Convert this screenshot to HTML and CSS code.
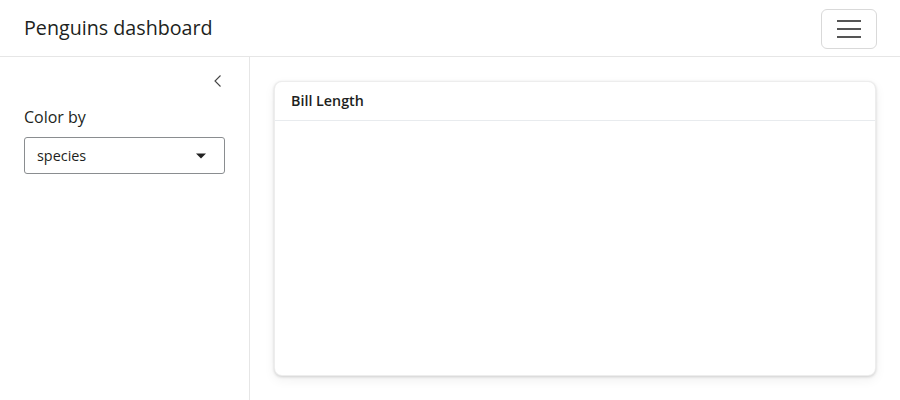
FILE: index.html
```html
<!DOCTYPE html>
<html>
<head>
<meta charset="utf-8">
<link rel="stylesheet" href="styles.css">
</head>
<body>
<header class="navbar">
  <span class="brand">Penguins dashboard</span>
  <button class="toggler" aria-label="menu">
    <svg width="26" height="20" viewBox="0 0 26 20"><path d="M1 2h24M1 10h24M1 18h24" stroke="#555" stroke-width="2"/></svg>
  </button>
</header>
<div class="layout">
  <aside class="sidebar">
    <div class="collapse">
      <svg width="16" height="16" viewBox="0 0 16 16"><path d="M10.5 2.5 5 8l5.5 5.5" fill="none" stroke="#444" stroke-width="1.1"/></svg>
    </div>
    <label class="label">Color by</label>
    <div class="select">
      <span>species</span>
      <svg width="12" height="8" viewBox="0 0 12 8"><path d="M1 1.5h10L6 6.5z" fill="#222"/></svg>
    </div>
  </aside>
  <main class="main">
    <section class="card">
      <div class="card-header">Bill Length</div>
      <div class="card-body"></div>
    </section>
  </main>
</div>
</body>
</html>
```
FILE: styles.css
```css
* { box-sizing: border-box; }
html, body { margin: 0; height: 100%; }
body {
  font-family: "Open Sans", sans-serif;
  color: #1d1f21;
  background: #fff;
  display: flex;
  flex-direction: column;
}
.navbar {
  height: 57px;
  border-bottom: 1px solid #e6e6e6;
  display: flex;
  align-items: center;
  justify-content: space-between;
  padding: 0 23px 0 24px;
}
.brand { font-size: 19.7px; color: #1d1f21; margin-top: -1px; }
.toggler {
  width: 56px;
  height: 40px;
  border: 1px solid #d9d9d9;
  border-radius: 6px;
  background: #fff;
  display: flex;
  align-items: center;
  justify-content: center;
  padding: 0;
  margin-top: 1px;
}
.layout { flex: 1; display: flex; }
.sidebar {
  width: 250px;
  border-right: 1px solid #e6e6e6;
  padding: 16px 24px 24px 24px;
  display: flex;
  flex-direction: column;
}
.collapse {
  display: flex;
  justify-content: flex-end;
  margin-right: -1px;
  height: 16px;
  margin-bottom: 16px;
}
.label { font-size: 16px; line-height: 24px; margin-bottom: 8px; }
.select {
  height: 37px;
  border: 1px solid #8a8d90;
  border-radius: 3px;
  display: flex;
  align-items: center;
  justify-content: space-between;
  padding: 0 17px 0 12px;
  font-size: 14.4px;
}
.main {
  flex: 1;
  padding: 24px 24px 24px 24px;
  background: #fff;
}
.card {
  height: 295px;
  border-radius: 8px;
  border: 1px solid rgba(0,0,0,0.07);
  background: #fff;
  box-shadow: 0 1px 3px rgba(0,0,0,0.16), 0 4px 12px rgba(0,0,0,0.06);
  display: flex;
  flex-direction: column;
}
.card-header {
  height: 39px;
  border-bottom: 1px solid #e8ebee;
  padding: 0 16px 1px;
  display: flex;
  align-items: center;
  font-size: 14.3px;
  font-weight: 600;
}
.card-body { flex: 1; }
```
